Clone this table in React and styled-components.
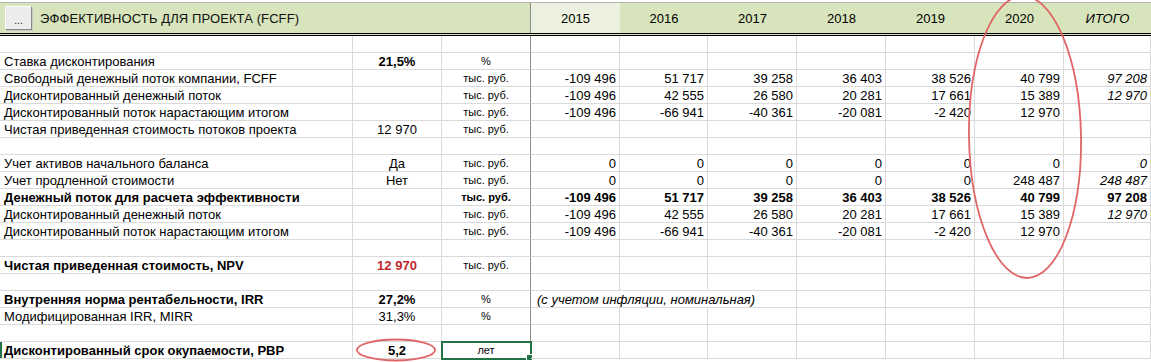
import React from "react";
import styled, { createGlobalStyle } from "styled-components";

const COLS = "353px 89px 89px 89px 88px 89px 89px 89px 89px 87px";
const YEARS = ["2015", "2016", "2017", "2018", "2019", "2020"];

const rows = [
  { label: "" },
  { label: "Ставка дисконтирования", value: "21,5%", valueBold: true, unit: "%" },
  {
    label: "Свободный денежный поток компании, FCFF",
    unit: "тыс. руб.",
    years: ["-109 496", "51 717", "39 258", "36 403", "38 526", "40 799"],
    total: "97 208",
  },
  {
    label: "Дисконтированный денежный поток",
    unit: "тыс. руб.",
    years: ["-109 496", "42 555", "26 580", "20 281", "17 661", "15 389"],
    total: "12 970",
  },
  {
    label: "Дисконтированный поток нарастающим итогом",
    unit: "тыс. руб.",
    years: ["-109 496", "-66 941", "-40 361", "-20 081", "-2 420", "12 970"],
  },
  { label: "Чистая приведенная стоимость потоков проекта", value: "12 970", unit: "тыс. руб." },
  { label: "" },
  {
    label: "Учет активов начального баланса",
    value: "Да",
    unit: "тыс. руб.",
    years: ["0", "0", "0", "0", "0", "0"],
    total: "0",
  },
  {
    label: "Учет продленной стоимости",
    value: "Нет",
    unit: "тыс. руб.",
    years: ["0", "0", "0", "0", "0", "248 487"],
    total: "248 487",
  },
  {
    label: "Денежный поток для расчета эффективности",
    bold: true,
    unitBold: true,
    unit: "тыс. руб.",
    years: ["-109 496", "51 717", "39 258", "36 403", "38 526", "40 799"],
    total: "97 208",
  },
  {
    label: "Дисконтированный денежный поток",
    unit: "тыс. руб.",
    years: ["-109 496", "42 555", "26 580", "20 281", "17 661", "15 389"],
    total: "12 970",
  },
  {
    label: "Дисконтированный поток нарастающим итогом",
    unit: "тыс. руб.",
    years: ["-109 496", "-66 941", "-40 361", "-20 081", "-2 420", "12 970"],
  },
  { label: "" },
  {
    label: "Чистая приведенная стоимость, NPV",
    bold: true,
    value: "12 970",
    valueBold: true,
    valueColor: "#c0262c",
    unit: "тыс. руб.",
  },
  { label: "" },
  {
    label: "Внутренняя норма рентабельности, IRR",
    bold: true,
    value: "27,2%",
    valueBold: true,
    unit: "%",
    note: "(с учетом инфляции, номинальная)",
  },
  { label: "Модифицированная IRR, MIRR", value: "31,3%", unit: "%" },
  { label: "" },
  {
    label: "Дисконтированный срок окупаемости, PBP",
    bold: true,
    value: "5,2",
    valueBold: true,
    unit: "лет",
    selected: true,
  },
];

export default function App() {
  return (
    <Page>
      <GlobalStyle />
      <Header>
        <TitleCell>
          <DotsButton>...</DotsButton>
          <Title>ЭФФЕКТИВНОСТЬ ДЛЯ ПРОЕКТА (FCFF)</Title>
        </TitleCell>
        {YEARS.map((y, i) => (
          <YearHead key={y} $light={i === 0}>
            {y}
          </YearHead>
        ))}
        <YearHead $italic>ИТОГО</YearHead>
      </Header>

      <Sheet>
        {rows.map((r, i) => (
          <React.Fragment key={i}>
            <Label $bold={r.bold} $marker={r.selected}>
              {r.label}
            </Label>
            <Cell $align="center" $bold={r.valueBold} $color={r.valueColor}>
              {r.value}
            </Cell>
            <Cell $align="center" $small $bold={r.unitBold} $edge $selected={r.selected}>
              {r.unit}
            </Cell>
            {r.note ? (
              <>
                <Cell $align="left" $italic $span={3} $pad="6px">
                  {r.note}
                </Cell>
                <Cell />
                <Cell />
                <Cell />
                <Cell />
              </>
            ) : (
              <>
                {YEARS.map((y, j) => (
                  <Cell key={y} $bold={r.bold}>
                    {r.years ? r.years[j] : ""}
                  </Cell>
                ))}
                <Cell $bold={r.bold} $italic={!r.bold}>
                  {r.total}
                </Cell>
              </>
            )}
          </React.Fragment>
        ))}
      </Sheet>

      <Marks width="1151" height="362" viewBox="0 0 1151 362">
        <ellipse cx="1025" cy="137" rx="56" ry="141" transform="rotate(-1 1025 137)" />
        <ellipse cx="396" cy="350" rx="39" ry="10.5" />
      </Marks>
    </Page>
  );
}

const GlobalStyle = createGlobalStyle`
  body {
    margin: 0;
    background: #ffffff;
    font-family: "Liberation Sans", Arial, sans-serif;
    color: #000;
  }
`;

const Page = styled.div`
  position: relative;
  width: 1151px;
  height: 362px;
  overflow: hidden;
  padding-top: 2px;
  box-sizing: border-box;
`;

const Header = styled.div`
  display: grid;
  grid-template-columns: ${COLS};
  height: 30px;
  background: #d8e4bc;
  border-top: 1px solid #b4b4b4;
  border-bottom: 3px double #000;
`;

const TitleCell = styled.div`
  grid-column: span 3;
  display: flex;
  align-items: center;
  gap: 8px;
  padding-left: 5px;
  border-right: 1px solid #8c8c8c;
`;

const DotsButton = styled.div`
  width: 27px;
  height: 24px;
  box-sizing: border-box;
  background: #ececec;
  border: 1px solid;
  border-color: #ffffff #8a8a8a #8a8a8a #ffffff;
  box-shadow: 1px 1px 0 #c8c8c8;
  font-size: 10px;
  text-align: center;
  line-height: 28px;
  color: #222;
`;

const Title = styled.span`
  font-size: 13px;
  color: #111;
  letter-spacing: 0.1px;
`;

const YearHead = styled.div`
  display: flex;
  align-items: center;
  justify-content: center;
  font-size: 13px;
  font-style: ${(p) => (p.$italic ? "italic" : "normal")};
  background: ${(p) => (p.$light ? "#ebf1de" : "transparent")};
`;

const Sheet = styled.div`
  display: grid;
  grid-template-columns: ${COLS};
  grid-auto-rows: 17px;
`;

const Cell = styled.div`
  position: relative;
  grid-column: span ${(p) => p.$span || 1};
  box-sizing: border-box;
  height: 17px;
  padding: 0 ${(p) => (p.$align === "left" ? "0" : "3px")} 0 ${(p) => p.$pad || "3px"};
  border-bottom: 1px solid #dadada;
  border-right: 1px solid ${(p) => (p.$edge ? "#8c8c8c" : "#dadada")};
  font-size: ${(p) => (p.$small ? "11px" : "13px")};
  line-height: 17px;
  font-weight: ${(p) => (p.$bold ? 700 : 400)};
  font-style: ${(p) => (p.$italic ? "italic" : "normal")};
  color: ${(p) => p.$color || "#000"};
  text-align: ${(p) => p.$align || "right"};
  white-space: nowrap;
  outline: ${(p) => (p.$selected ? "2px solid #217346" : "none")};
  outline-offset: -1px;

  &::after {
    content: "";
    display: ${(p) => (p.$selected ? "block" : "none")};
    position: absolute;
    right: -3px;
    bottom: -3px;
    width: 5px;
    height: 5px;
    background: #217346;
    border: 1px solid #fff;
  }
`;

const Label = styled.div`
  box-sizing: border-box;
  height: 17px;
  padding-left: 4px;
  border-bottom: 1px solid #dadada;
  border-right: 1px solid #dadada;
  font-size: 13px;
  line-height: 17px;
  font-weight: ${(p) => (p.$bold ? 700 : 400)};
  white-space: nowrap;
  box-shadow: ${(p) => (p.$marker ? "inset 2px 0 0 #217346" : "none")};
`;

const Marks = styled.svg`
  position: absolute;
  left: 0;
  top: 0;
  pointer-events: none;

  ellipse {
    fill: none;
    stroke: #e06666;
    stroke-width: 1.8;
  }
`;
